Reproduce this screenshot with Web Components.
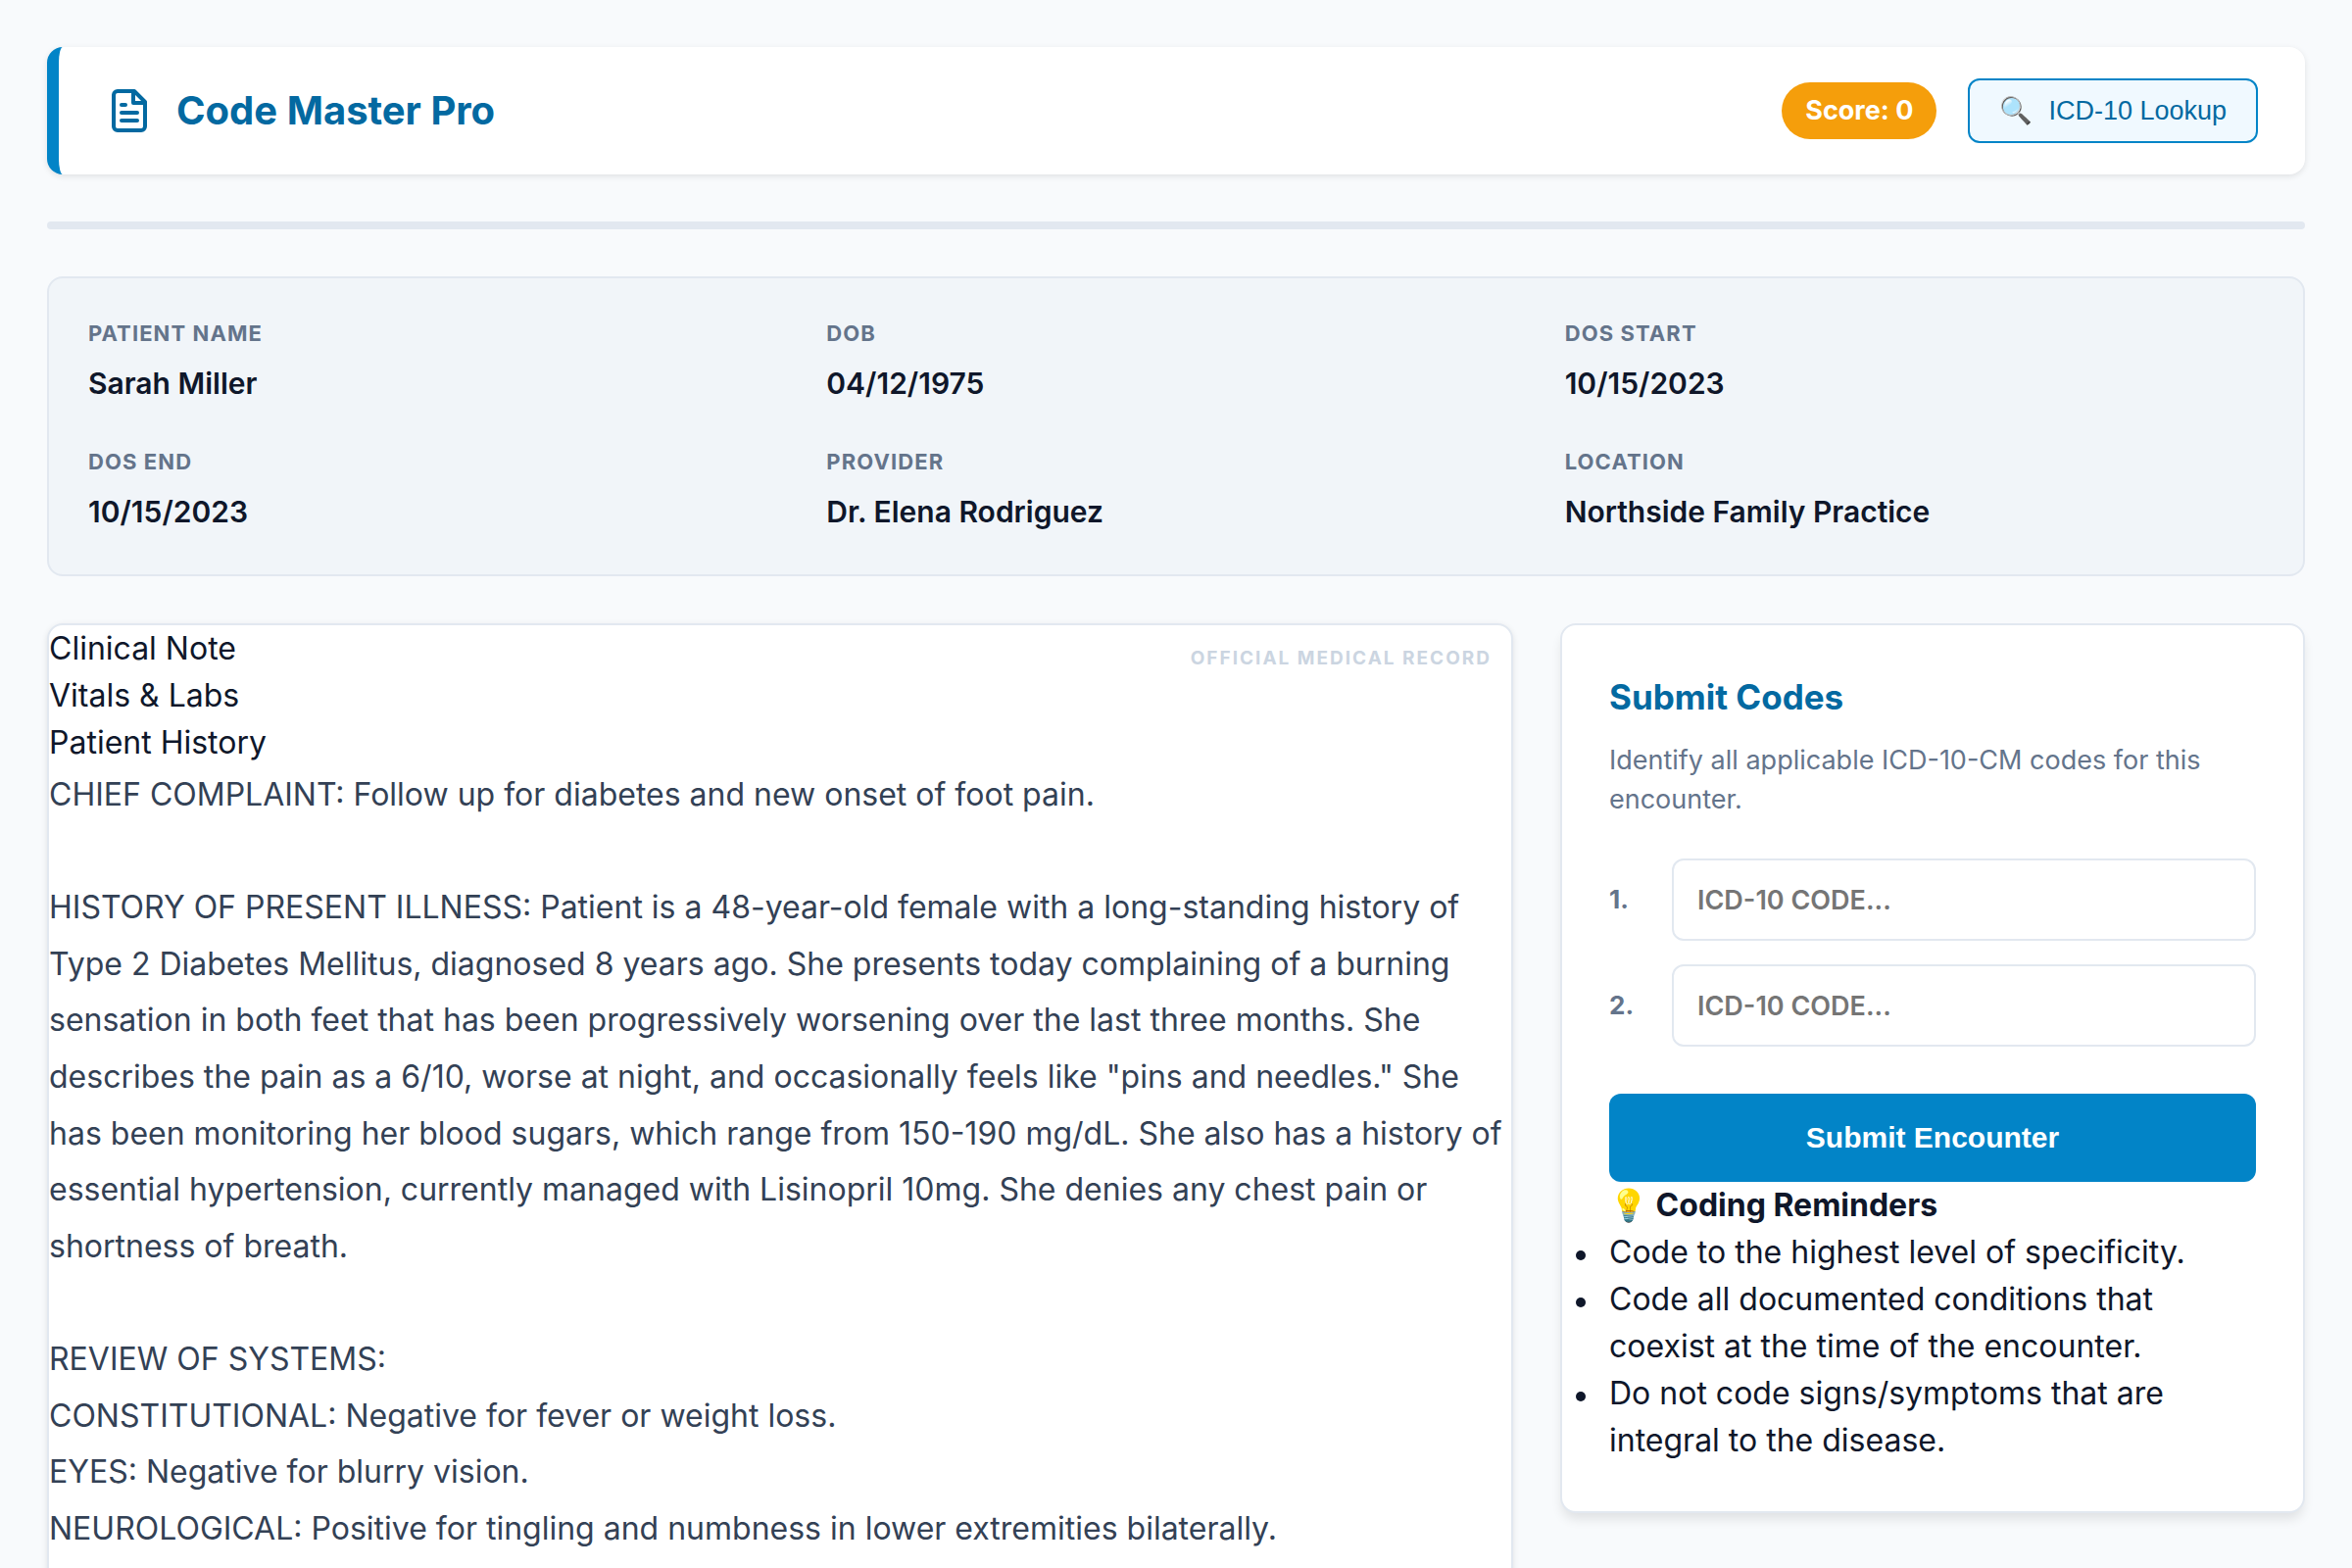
<!DOCTYPE html>
<html lang="en">
<head>
<meta charset="utf-8">
<title>Code Master Pro</title>
<style>
  html { background: #f8fafc; }
  body {
    margin: 0;
    color: #0f172a;
    font: 400 32px/48px Inter, "Liberation Sans", sans-serif;
  }
</style>
</head>
<body>
<coder-app>
  <app-header slot="header" score="0">Code Master Pro</app-header>
  <progress-line slot="header"></progress-line>
  <patient-banner slot="header">
    <patient-field label="PATIENT NAME">Sarah Miller</patient-field>
    <patient-field label="DOB">04/12/1975</patient-field>
    <patient-field label="DOS START">10/15/2023</patient-field>
    <patient-field label="DOS END">10/15/2023</patient-field>
    <patient-field label="PROVIDER">Dr. Elena Rodriguez</patient-field>
    <patient-field label="LOCATION">Northside Family Practice</patient-field>
  </patient-banner>
  <medical-record slot="record">
    <div slot="tab">Clinical Note</div>
    <div slot="tab">Vitals &amp; Labs</div>
    <div slot="tab">Patient History</div>
    <div slot="note">CHIEF COMPLAINT: Follow up for diabetes and new onset of foot pain.

HISTORY OF PRESENT ILLNESS: Patient is a 48-year-old female with a long-standing history of Type 2 Diabetes Mellitus, diagnosed 8 years ago. She presents today complaining of a burning sensation in both feet that has been progressively worsening over the last three months. She describes the pain as a 6/10, worse at night, and occasionally feels like "pins and needles." She has been monitoring her blood sugars, which range from 150-190 mg/dL. She also has a history of essential hypertension, currently managed with Lisinopril 10mg. She denies any chest pain or shortness of breath.

REVIEW OF SYSTEMS:
CONSTITUTIONAL: Negative for fever or weight loss.
EYES: Negative for blurry vision.
NEUROLOGICAL: Positive for tingling and numbness in lower extremities bilaterally.</div>
  </medical-record>
  <submit-panel slot="panel">
    <code-entry slot="codes" number="1"></code-entry>
    <code-entry slot="codes" number="2"></code-entry>
    <coding-reminders></coding-reminders>
  </submit-panel>
</coder-app>

<script>
  const define = (name, render) => customElements.define(name, class extends HTMLElement {
    connectedCallback() {
      if (this.shadowRoot) return;
      const template = document.createElement('template');
      template.innerHTML = '<style>*{box-sizing:border-box}:host{display:block;box-sizing:border-box}</style>' + render(this);
      this.attachShadow({ mode: 'open' }).append(template.content.cloneNode(true));
    }
  });

  define('coder-app', () => `
    <style>
      :host { display: flex; flex-direction: column; gap: 48px; padding: 48px; height: 100vh; overflow: hidden; }
      main { display: grid; grid-template-columns: minmax(0, 1fr) 760px; gap: 48px; align-items: start; }
    </style>
    <slot name="header"></slot>
    <main><slot name="record"></slot><slot name="panel"></slot></main>`);

  define('app-header', el => `
    <style>
      :host {
        display: flex; align-items: center; justify-content: space-between; flex: none;
        padding: 32px 48px; background: #fff; border-left: 12px solid #0284c7; border-radius: 16px;
        box-shadow: 0 2px 6px rgba(0, 0, 0, .1);
      }
      .brand, .tools { display: flex; align-items: center; }
      .brand { gap: 24px; color: #0369a1; }
      .tools { gap: 32px; }
      svg { width: 48px; height: 48px; }
      h1 { margin: 0; font-size: 40px; line-height: 60px; font-weight: 700; }
      .score {
        padding: 8px 24px; border-radius: 40px; background: #f59e0b; color: #fff;
        font-size: 27px; line-height: 42px; font-weight: 700;
      }
      button {
        display: flex; align-items: center; gap: 16px; padding: 16px 30px;
        border: 2px solid #0284c7; border-radius: 12px; background: #f0f9ff; color: #0369a1;
        font: 400 27px/30px "Liberation Sans", Arial, sans-serif;
      }
    </style>
    <div class="brand">
      <svg viewBox="0 0 24 24" fill="none" stroke="currentColor" stroke-width="2" stroke-linecap="round" stroke-linejoin="round" aria-hidden="true">
        <path d="M14.5 2H6a2 2 0 0 0-2 2v16a2 2 0 0 0 2 2h12a2 2 0 0 0 2-2V7.5L14.5 2z"/>
        <path d="M14 2v6h6"/><path d="M16 13H8"/><path d="M16 17H8"/><path d="M10 9H8"/>
      </svg>
      <h1><slot></slot></h1>
    </div>
    <div class="tools">
      <div class="score">Score: ${el.getAttribute('score')}</div>
      <button type="button"><span>🔍</span><span>ICD-10 Lookup</span></button>
    </div>`);

  define('progress-line', () => `
    <style>:host { flex: none; height: 8px; border-radius: 4px; background: #e2e8f0; }</style>`);

  define('patient-banner', () => `
    <style>
      :host {
        display: grid; flex: none; grid-template-columns: repeat(3, minmax(0, 1fr)); gap: 40px; padding: 40px;
        border: 2px solid #e2e8f0; border-radius: 16px; background: #f1f5f9;
      }
    </style>
    <slot></slot>`);

  define('patient-field', el => `
    <style>
      .label { margin-bottom: 10px; color: #64748b; font-size: 22px; line-height: 33px; font-weight: 700; letter-spacing: 0.05em; }
      .value { font-size: 30px; line-height: 48px; font-weight: 600; }
    </style>
    <div class="label">${el.getAttribute('label')}</div>
    <div class="value"><slot></slot></div>`);

  define('medical-record', () => `
    <style>
      :host {
        position: relative; padding-bottom: 80px; background: #fff;
        border: 2px solid #e2e8f0; border-radius: 16px; box-shadow: 0 2px 6px rgba(0, 0, 0, .1);
      }
      .stamp {
        position: absolute; top: 20px; right: 20px; color: #cbd5e1;
        font-size: 19px; line-height: 28px; font-weight: 700; letter-spacing: 2px;
      }
      .note { color: #334155; line-height: 1.8; white-space: pre-line; }
    </style>
    <div class="stamp">OFFICIAL MEDICAL RECORD</div>
    <slot name="tab"></slot>
    <div class="note"><slot name="note"></slot></div>`);

  define('submit-panel', () => `
    <style>
      :host {
        padding: 48px; background: #fff; border: 2px solid #e2e8f0; border-radius: 16px;
        box-shadow: 0 8px 12px -2px rgba(0, 0, 0, .1);
      }
      h2 { margin: 0 0 20px; color: #0369a1; font-size: 35px; line-height: 50px; font-weight: 700; }
      p { margin: 0 0 40px; color: #64748b; font-size: 27px; line-height: 40px; }
      .codes { display: flex; flex-direction: column; gap: 24px; margin-bottom: 48px; }
      button {
        display: block; width: 100%; padding: 28px; border: 0; border-radius: 12px; background: #0284c7; color: #fff;
        font: 700 30px/34px "Liberation Sans", Arial, sans-serif;
      }
    </style>
    <h2>Submit Codes</h2>
    <p>Identify all applicable ICD-10-CM codes for this encounter.</p>
    <div class="codes"><slot name="codes"></slot></div>
    <button type="button">Submit Encounter</button>
    <slot></slot>`);

  define('code-entry', el => `
    <style>
      :host { display: flex; align-items: center; gap: 24px; }
      label { flex: none; width: 40px; color: #64748b; font-size: 26px; line-height: 40px; font-weight: 700; }
      input {
        flex: 1; min-width: 0; height: 84px; padding: 0 24px; border: 2px solid #e2e8f0; border-radius: 12px;
        background: #fff; color: #0f172a; font: 600 27px/40px Inter, "Liberation Sans", sans-serif;
      }
      input::placeholder { color: #757575; }
    </style>
    <label for="code">${el.getAttribute('number')}.</label>
    <input id="code" type="text" placeholder="ICD-10 CODE...">`);

  define('coding-reminders', () => `
    <style>
      h3 { margin: 0; font-size: 32px; line-height: 48px; font-weight: 700; }
      ul { margin: 0 0 0 -34px; padding: 0; list-style: none; }
      li { display: flex; gap: 24px; }
      li::before { content: ""; flex: none; width: 10px; height: 10px; margin-top: 22px; border-radius: 50%; background: currentColor; }
    </style>
    <h3>💡 Coding Reminders</h3>
    <ul>
      <li>Code to the highest level of specificity.</li>
      <li>Code all documented conditions that coexist at the time of the encounter.</li>
      <li>Do not code signs/symptoms that are integral to the disease.</li>
    </ul>`);
</script>
</body>
</html>
